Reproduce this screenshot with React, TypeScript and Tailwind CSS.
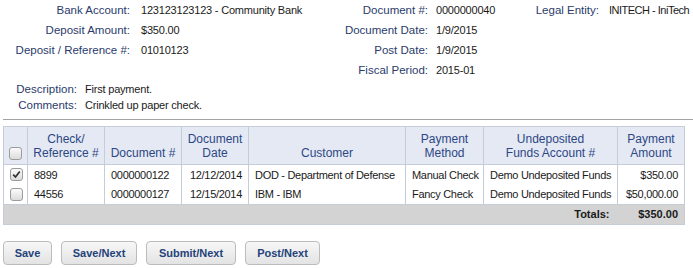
import React from "react";

const font = { fontFamily: '"Liberation Sans", Arial, sans-serif' };

function Box({ checked }: { checked?: boolean }) {
  return (
    <div className="w-[13px] h-[13px] rounded-[3px] border border-[#9c9c9c] bg-gradient-to-b from-[#fbfbfb] to-[#dcdcdc] flex items-center justify-center">
      {checked && (
        <svg width="9" height="9" viewBox="0 0 9 9">
          <path d="M1.2 4.6 L3.5 7 L7.8 1.5" stroke="#333" strokeWidth="1.8" fill="none" />
        </svg>
      )}
    </div>
  );
}

const L = "text-right text-[#2a3b6c] text-[11.5px] whitespace-nowrap";
const V = "text-[#1a1a1a] tracking-[-0.2px] whitespace-nowrap";

export default function App() {
  const rows = [
    { c: true, ref: "8899", doc: "0000000122", date: "12/12/2014", cust: "DOD - Department of Defense", pm: "Manual Check", acct: "Demo Undeposited Funds", amt: "$350.00" },
    { c: false, ref: "44556", doc: "0000000127", date: "12/15/2014", cust: "IBM - IBM", pm: "Fancy Check", acct: "Demo Undeposited Funds", amt: "$50,000.00" },
  ];
  const th = "border border-[#c6cdd9] bg-[#e4e9f4] text-[#2d4785] text-[12px] leading-[14px] font-normal text-center align-bottom pt-[5px] pb-[4px] px-[4px]";
  const td = "border-x border-[#c6cdd9] text-[11px] tracking-[-0.3px] text-[#1a1a1a] h-[20px] px-[6px] align-middle whitespace-nowrap";
  return (
    <div className="w-[693px] h-[268px] bg-white overflow-hidden text-[11px]" style={font}>
      <div className="grid grid-cols-[130px_200px_98px_100px_71px_94px] leading-5">
        <div className={L}>Bank Account:</div>
        <div className={`${V} pl-[11px]`}>123123123123 - Community Bank</div>
        <div className={L}>Document #:</div>
        <div className={`${V} pl-[8px]`}>0000000040</div>
        <div className={L}>Legal Entity:</div>
        <div className={`${V} pl-[10px] tracking-[-0.5px]`}>INITECH - IniTech</div>

        <div className={L}>Deposit Amount:</div>
        <div className={`${V} pl-[11px]`}>$350.00</div>
        <div className={L}>Document Date:</div>
        <div className={`${V} pl-[8px]`}>1/9/2015</div>
        <div />
        <div />

        <div className={L}>Deposit / Reference #:</div>
        <div className={`${V} pl-[11px]`}>01010123</div>
        <div className={L}>Post Date:</div>
        <div className={`${V} pl-[8px]`}>1/9/2015</div>
        <div />
        <div />

        <div />
        <div />
        <div className={L}>Fiscal Period:</div>
        <div className={`${V} pl-[8px]`}>2015-01</div>
        <div />
        <div />
      </div>

      <div className="mt-px grid grid-cols-[77px_1fr] leading-4">
        <div className={L}>Description:</div>
        <div className={`${V} pl-[8px]`}>First payment.</div>
        <div className={L}>Comments:</div>
        <div className={`${V} pl-[8px]`}>Crinkled up paper check.</div>
      </div>

      <div className="mt-[6px] ml-[3px] border-t border-[#a3a3a3]" />

      <table className="mt-[6px] ml-[3px] table-fixed border-collapse w-[681px]">
        <colgroup>
          <col className="w-[24px]" />
          <col className="w-[77px]" />
          <col className="w-[77px]" />
          <col className="w-[67px]" />
          <col className="w-[157px]" />
          <col className="w-[78px]" />
          <col className="w-[134px]" />
          <col className="w-[67px]" />
        </colgroup>
        <thead>
          <tr>
            <th className={`${th} px-[5px]`}>
              <Box />
            </th>
            <th className={th}>Check/<br />Reference #</th>
            <th className={th}>Document #</th>
            <th className={th}>Document<br />Date</th>
            <th className={th}>Customer</th>
            <th className={th}>Payment<br />Method</th>
            <th className={th}>Undeposited<br />Funds Account #</th>
            <th className={th}>Payment<br />Amount</th>
          </tr>
        </thead>
        <tbody>
          {rows.map((r, i) => (
            <tr key={i}>
              <td className={`${td} px-[5px] border-l`}>
                <Box checked={r.c} />
              </td>
              <td className={td}>{r.ref}</td>
              <td className={td}>{r.doc}</td>
              <td className={`${td} text-right`}>{r.date}</td>
              <td className={td}>{r.cust}</td>
              <td className={td}>{r.pm}</td>
              <td className={td}>{r.acct}</td>
              <td className={`${td} text-right`}>{r.amt}</td>
            </tr>
          ))}
          <tr className="bg-[#d3d3d3] h-[20px]">
            <td colSpan={7} className="border-y border-l border-[#c6cdd9] text-right font-bold text-[11px] text-[#1a1a1a] pr-[8px]">Totals:</td>
            <td className="border-y border-r border-[#c6cdd9] text-right font-bold text-[11px] text-[#1a1a1a] pr-[6px]">$350.00</td>
          </tr>
        </tbody>
      </table>

      <div className="mt-4 ml-[3px] flex gap-[9px]">
        {[
          ["Save", "w-[49px]"],
          ["Save/Next", "w-[76px]"],
          ["Submit/Next", "w-[90px]"],
          ["Post/Next", "w-[75px]"],
        ].map(([t, w]) => (
          <button
            key={t}
            className={`${w} h-6 rounded-[4px] border border-[#bcbcbc] bg-gradient-to-b from-[#f7f7f7] to-[#e3e3e3] text-[11px] font-bold text-[#24427a]`}
          >
            {t}
          </button>
        ))}
      </div>
    </div>
  );
}
